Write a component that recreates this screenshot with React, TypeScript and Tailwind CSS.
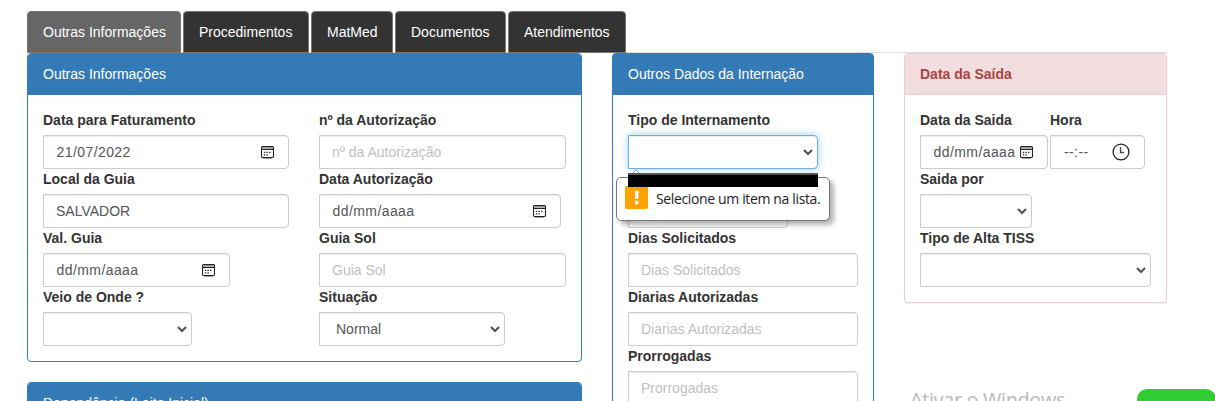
import type { ReactNode } from "react";
import clsx from "clsx";

const CalendarIcon = ({ className }: { className?: string }) => (
  <svg className={clsx("shrink-0", className)} width="13" height="13" viewBox="0 0 13 13" fill="none">
    <rect x="0.5" y="0.5" width="12" height="11" rx="1.2" stroke="#222" strokeWidth="1.1" />
    <path d="M1 1.9H12" stroke="#999" strokeWidth="1.8" />
    <path d="M1 3.5H12" stroke="#222" strokeWidth="1" />
    <path d="M5.4 6.4h1.4M8 6.4h1.4M2.8 6.4h1.4M2.8 8.9h1.4M5.4 8.9h1.4" stroke="#222" strokeWidth="1.3" />
    <path d="M2 12.6H11" stroke="#777" strokeWidth="0.8" />
  </svg>
);

const ClockIcon = ({ className }: { className?: string }) => (
  <svg className={clsx("shrink-0", className)} width="18" height="18" viewBox="0 0 18 18" fill="none">
    <circle cx="9" cy="9" r="7.9" stroke="#222" strokeWidth="1.3" />
    <path d="M8.5 4.2V9.5H12" stroke="#444" strokeWidth="1.3" />
  </svg>
);

const Chevron = () => (
  <svg className="mr-[4px] shrink-0" width="10" height="8" viewBox="0 0 10 8" fill="none">
    <path d="M1 2L5 6L9 2" stroke="#505050" strokeWidth="2" />
  </svg>
);

const Tab = ({ children, width, active }: { children: string; width: string; active?: boolean }) => (
  <button
    className={clsx(
      "h-[42px] shrink-0 whitespace-nowrap rounded-t border border-[#777] pl-[15px] text-left text-white",
      width,
      active ? "bg-[#666]" : "bg-[#333]",
    )}
  >
    {children}
  </button>
);

const Field = ({ label, children }: { label: string; children: ReactNode }) => (
  <div className="flex flex-col">
    <div className="mb-[5px] h-5 whitespace-nowrap font-bold text-[#333]">{label}</div>
    {children}
  </div>
);

const Box = ({ children, className, focus }: { children?: ReactNode; className?: string; focus?: boolean }) => (
  <div
    className={clsx(
      "flex h-[34px] items-center justify-between whitespace-nowrap rounded-r border text-[#555]",
      focus
        ? "border-[#66afe9] shadow-[inset_0_1px_1px_rgba(0,0,0,0.075),0_0_8px_rgba(102,175,233,0.6)]"
        : "border-[#ccc] shadow-[inset_0_1px_1px_rgba(0,0,0,0.075)]",
      className,
    )}
  >
    {children}
  </div>
);

const TextBox = ({ placeholder, value }: { placeholder?: string; value?: string }) => (
  <Box>
    <span className={clsx("pl-3", value ? "text-[#555]" : "text-[#bfbfbf]")}>{value ?? placeholder}</span>
  </Box>
);

const DateBox = ({ value, className }: { value: string; className?: string }) => (
  <Box className={className}>
    <span className="pl-[12.5px] tracking-[0.42px]">{value}</span>
    <CalendarIcon className="mr-[14px]" />
  </Box>
);

const SelectBox = ({ value, className, focus }: { value?: string; className?: string; focus?: boolean }) => (
  <Box className={className} focus={focus}>
    <span className="pl-4">{value}</span>
    <Chevron />
  </Box>
);

const PanelHeader = ({ children }: { children: string }) => (
  <div className="h-[41px] bg-[#337ab7] pl-[15px] pt-[10px] text-white">{children}</div>
);

const ValidationTip = () => (
  <div className="absolute left-[3px] top-[82px] z-10 h-[44px] w-[214px] rounded-[5px] border border-[#767676] bg-white shadow-[4px_4px_5px_rgba(0,0,0,0.3)]">
    <svg className="absolute left-[11px] top-[-9px]" width="16" height="10" viewBox="0 0 16 10">
      <path d="M0 9L8 1L16 9V10H0Z" fill="white" />
      <path d="M0 9L8 1L16 9" fill="none" stroke="#999" />
    </svg>
    <div className="absolute left-[8px] top-[8px] flex h-[23px] w-[23px] justify-center rounded-[2px] bg-[#ffa200]">
      <svg width="23" height="23" viewBox="0 0 23 23" fill="white">
        <path d="M9.7 4.8h4l-.5 8.3h-3z" />
        <circle cx="11.7" cy="16.6" r="2" />
      </svg>
    </div>
    <span className="absolute left-[39px] top-[11px] whitespace-nowrap font-['Open_Sans',sans-serif] text-[14px] leading-5 tracking-[-0.36px] text-[#222]">
      Selecione um item na lista.
    </span>
    <div className="absolute left-[11px] top-[-5px] h-[14px] w-[190px] border-t-2 border-[#555] bg-black" />
  </div>
);

export default function App() {
  return (
    <div className="relative h-[401px] w-[1215px] overflow-hidden bg-white pl-[27px] pt-[11px] font-['Liberation_Sans',Arial,sans-serif] text-[14px] leading-5">
      <nav className="flex h-[42px] w-[1140px] gap-[2px] border-b border-[#ddd]">
        <Tab active width="w-[154px]">Outras Informações</Tab>
        <Tab width="w-[126px]">Procedimentos</Tab>
        <Tab width="w-[82px]">MatMed</Tab>
        <Tab width="w-[111px]">Documentos</Tab>
        <Tab width="w-[118px]">Atendimentos</Tab>
      </nav>

      <main className="flex items-start">
        <div className="mr-[30px] flex w-[555px] flex-col gap-5">
          <section className="overflow-hidden rounded border border-[#337ab7]">
            <PanelHeader>Outras Informações</PanelHeader>
            <div className="grid grid-cols-[246px_247px] gap-x-[30px] p-[15px]">
              <Field label="Data para Faturamento"><DateBox value="21/07/2022" /></Field>
              <Field label="nº da Autorização"><TextBox placeholder="nº da Autorização" /></Field>
              <Field label="Local da Guia"><TextBox value="SALVADOR" /></Field>
              <Field label="Data Autorização"><DateBox value="dd/mm/aaaa" className="w-[242px]" /></Field>
              <Field label="Val. Guia"><DateBox value="dd/mm/aaaa" className="w-[187px]" /></Field>
              <Field label="Guia Sol"><TextBox placeholder="Guia Sol" /></Field>
              <Field label="Veio de Onde ?"><SelectBox className="w-[149px]" /></Field>
              <Field label="Situação"><SelectBox value="Normal" className="w-[186px]" /></Field>
            </div>
          </section>
          <section className="h-[120px] overflow-hidden rounded border border-[#337ab7]">
            <PanelHeader>Dependência (Leito Inicial)</PanelHeader>
          </section>
        </div>

        <section className="mr-[30px] w-[262px] rounded border border-[#337ab7]">
          <PanelHeader>Outros Dados da Internação</PanelHeader>
          <div className="relative flex flex-col p-[15px]">
            <Field label="Tipo de Internamento"><SelectBox focus className="w-[190px]" /></Field>
            <Box className="mt-[25px] w-[160px]" />
            <Field label="Dias Solicitados"><TextBox placeholder="Dias Solicitados" /></Field>
            <Field label="Diarias Autorizadas"><TextBox placeholder="Diarias Autorizadas" /></Field>
            <Field label="Prorrogadas"><TextBox placeholder="Prorrogadas" /></Field>
            <ValidationTip />
          </div>
        </section>

        <section className="w-[263px] overflow-hidden rounded border border-[#ebccd1] shadow-[0_1px_1px_rgba(0,0,0,0.05)]">
          <div className="h-[41px] border-b border-[#ebccd1] bg-[#f2dede] pl-[15px] pt-[10px] font-bold text-[#a94442]">
            Data da Saída
          </div>
          <div className="flex flex-col p-[15px]">
            <div className="flex gap-[2px]">
              <Field label="Data da Saida"><DateBox value="dd/mm/aaaa" className="w-[128px]" /></Field>
              <Field label="Hora">
                <Box className="w-[95px]">
                  <span className="pl-[13px] tracking-[0.4px]">--:--</span>
                  <ClockIcon className="mr-[14px]" />
                </Box>
              </Field>
            </div>
            <Field label="Saida por"><SelectBox className="w-[112px]" /></Field>
            <Field label="Tipo de Alta TISS"><SelectBox className="w-[231px]" /></Field>
          </div>
        </section>
      </main>

      <div className="absolute left-[910px] top-[386px] whitespace-nowrap font-['Open_Sans',sans-serif] text-[20px] leading-[27px] tracking-[-0.4px] text-[#b8b8b8]">
        Ativar o Windows
      </div>
      <div className="absolute left-[1137px] top-[389px] h-[40px] w-[79px] rounded-[10px] bg-[#32cd32]" />
    </div>
  );
}
